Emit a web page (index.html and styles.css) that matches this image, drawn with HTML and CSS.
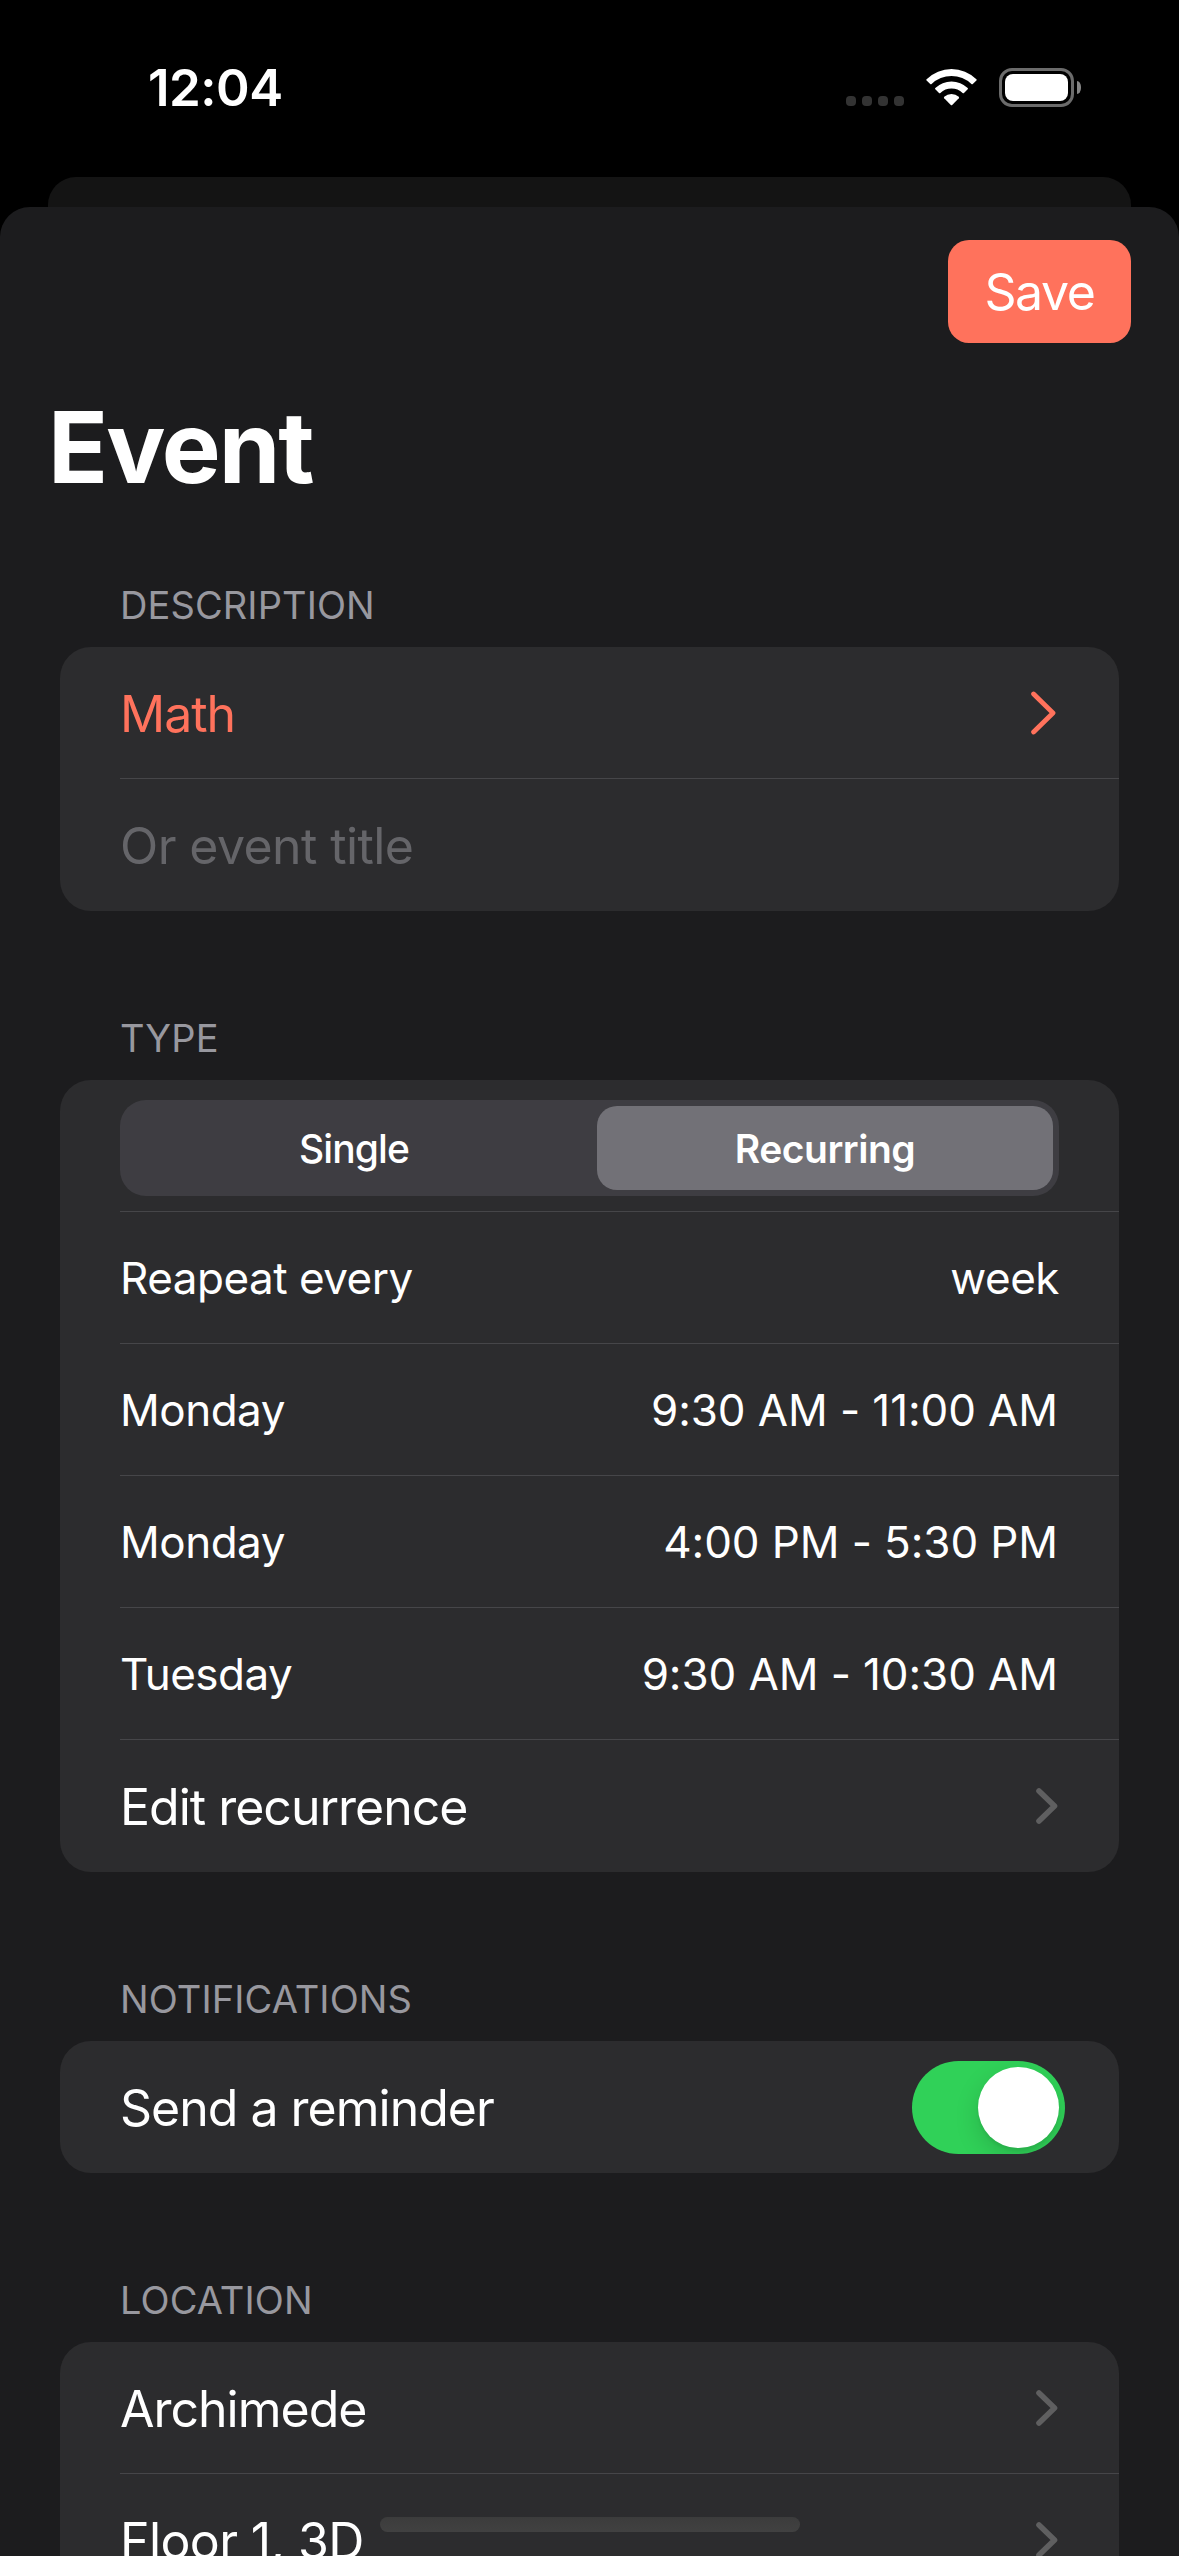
FILE: index.html
```html
<!DOCTYPE html>
<html lang="en">

<head>
    <meta charset="utf-8">
    <title>Event</title>
    <meta name="viewport" content="width=device-width,initial-scale=1">
    <link rel="stylesheet" href="styles.css">
</head>

<body>
    <svg class="defs">
        <symbol id="chevron" viewBox="0 0 22 36">
            <path d="M3 3 L18.5 18 L3 33" fill="none" stroke="currentColor" stroke-width="5.6" stroke-linecap="round" stroke-linejoin="round"/>
        </symbol>
    </svg>

    <header class="status">
        <span class="time">12:04</span>
        <div class="indicators">
            <div class="signal"><i></i><i></i><i></i><i></i></div>
            <svg class="wifi" viewBox="0 0 51 38">
                <path d="M0.6 11.2 A35.5 35.5 0 0 1 50.4 11.2 Q51 11.9 50.4 12.6 L46.8 16.1 Q46.1 16.6 45.4 16 A28.6 28.6 0 0 0 5.6 16 Q4.9 16.6 4.2 16.1 L0.6 12.6 Q0 11.9 0.6 11.2 Z"/>
                <path d="M9.3 20 A23.4 23.4 0 0 1 41.7 20 Q42.3 20.7 41.7 21.3 L38 25 Q37.3 25.5 36.6 24.9 A16.2 16.2 0 0 0 14.4 24.9 Q13.7 25.5 13 25 L9.3 21.3 Q8.7 20.7 9.3 20 Z"/>
                <path d="M18.2 28.8 A11 11 0 0 1 32.8 28.8 Q33.4 29.5 32.8 30.2 L26.2 37 Q25.5 37.7 24.8 37 L18.2 30.2 Q17.6 29.5 18.2 28.8 Z"/>
            </svg>
            <div class="battery">
                <div class="battery-body"><div class="battery-level"></div></div>
                <div class="battery-cap"></div>
            </div>
        </div>
    </header>

    <!-- edge of the sheet underneath -->
    <div class="sheet-behind"></div>

    <main class="sheet">
        <div class="toolbar">
            <button class="save">Save</button>
        </div>
        <h1>Event</h1>

        <section>
            <h2>Description</h2>
            <div class="card">
                <div class="row accent">
                    <span class="label">Math</span>
                    <svg class="chevron-big" viewBox="0 0 25 44"><path d="M2.6 3 L22 22 L2.6 41" fill="none" stroke="currentColor" stroke-width="4.8" stroke-linecap="round" stroke-linejoin="round"/></svg>
                </div>
                <div class="row placeholder"><span class="label title">Or event title</span></div>
            </div>
        </section>

        <section>
            <h2>Type</h2>
            <div class="card">
                <div class="row">
                    <div class="segmented">
                        <span class="segment">Single</span>
                        <span class="segment selected">Recurring</span>
                    </div>
                </div>
                <div class="row small"><span>Reapeat every</span><span>week</span></div>
                <div class="row small"><span>Monday</span><span class="hours">9:30 AM - 11:00 AM</span></div>
                <div class="row small"><span>Monday</span><span class="hours">4:00 PM - 5:30 PM</span></div>
                <div class="row small"><span>Tuesday</span><span class="hours">9:30 AM - 10:30 AM</span></div>
                <div class="row"><span class="label">Edit recurrence</span><svg class="chevron"><use href="#chevron"/></svg></div>
            </div>
        </section>

        <section>
            <h2>Notifications</h2>
            <div class="card">
                <div class="row">
                    <span class="label">Send a reminder</span>
                    <div class="switch"><div class="knob"></div></div>
                </div>
            </div>
        </section>

        <section>
            <h2>Location</h2>
            <div class="card">
                <div class="row"><span class="label">Archimede</span><svg class="chevron"><use href="#chevron"/></svg></div>
                <div class="row"><span class="label title">Floor 1, 3D</span><svg class="chevron"><use href="#chevron"/></svg></div>
            </div>
        </section>
    </main>

    <div class="home-indicator"></div>
</body>

</html>
```
FILE: styles.css
```css
* { margin:0; padding:0; box-sizing:border-box }
html,body { width:100%; height:100%; overflow:hidden; background:#000 }
body { display:flex; flex-direction:column; font-family:Inter,"Liberation Sans",sans-serif; font-size:50px; color:#fff; white-space:nowrap }
svg { display:block; flex:none }
.defs { position:absolute; width:0; height:0 }

/* status bar */
.status { flex:none; height:177px; padding:0 98px 0 148px; display:flex; justify-content:space-between }
.time { margin-top:57px; font-size:51px; font-weight:600; line-height:61px; letter-spacing:-0.5px }
.indicators { margin-top:68px; height:39px; display:flex }
.signal { display:flex; gap:6px; padding-top:28px; margin-right:22px }
.signal i { width:10px; height:10px; border-radius:4px; background:#333 }
.wifi { width:51px; height:38px; fill:#fff; margin-right:22px }
.battery { display:flex; align-items:center; gap:3px }
.battery-body { width:75px; height:39px; padding:3px; border:3px solid #6b6b6b; border-radius:13px }
.battery-level { width:63px; height:27px; border-radius:8px; background:#fff }
.battery-cap { width:4px; height:13px; border-radius:0 4px 4px 0 / 0 6px 6px 0; background:#858585 }

.sheet-behind { flex:none; height:30px; margin:0 48px; border-radius:28px 28px 0 0; background:#141414 }
.sheet { flex:1; min-height:0; overflow:hidden; border-radius:30px 30px 0 0; background:#1c1c1e }

.toolbar { height:136px; padding:33px 48px 0; display:flex; justify-content:flex-end }
.save { width:183px; height:103px; border:0; border-radius:21px; background:#ff725c; color:#fff; font:400 50px Inter,"Liberation Sans",sans-serif; letter-spacing:-1.4px }
h1 { height:205px; padding:44px 48px 0; font-size:99px; line-height:120px; font-weight:700; letter-spacing:-2px }

/* grouped list */
section { padding:0 60px; margin-bottom:70px }
h2 { height:99px; padding:34px 0 0 60px; font-size:38px; line-height:46px; font-weight:400; letter-spacing:0.1px; text-transform:uppercase; color:#98989f }
.card { border-radius:31px; background:#2c2c2e; overflow:hidden }
.row { height:132px; margin-left:60px; padding-right:60px; display:flex; align-items:center; justify-content:space-between; border-bottom:1px solid #464649 }
.row:last-child { border-bottom:0 }
.label { padding-top:2px; letter-spacing:-1px }
.title { letter-spacing:-0.6px }
.small { font-size:44px; letter-spacing:-0.5px }
.hours { margin-right:1px; letter-spacing:-0.1px }
.accent { color:#ff725c }
.placeholder { color:#656569 }
.chevron { width:22px; height:36px; margin-right:1px; color:#5f5f60 }
.chevron-big { width:25px; height:44px; margin-right:3px }

.segmented { width:939px; height:96px; padding:6px; margin-bottom:-5px; display:flex; border-radius:26px; background:#3e3d42 }
.segment { flex:1; padding-right:15px; display:flex; align-items:center; justify-content:center; font-size:39px; font-weight:500; letter-spacing:-0.9px }
.selected { flex:none; width:456px; padding:0; border-radius:20px; background:#727177; font-weight:600; letter-spacing:-0.5px }

.switch { width:153px; height:93px; padding:6px; margin-right:-6px; display:flex; justify-content:flex-end; border-radius:47px; background:#30d158; overflow:hidden }
.knob { width:81px; height:81px; border-radius:50%; background:#fff; box-shadow:0 9px 24px rgba(0,0,0,.15),0 3px 3px rgba(0,0,0,.06) }

.home-indicator { position:absolute; left:380px; top:2517px; width:420px; height:15px; border-radius:8px; background:linear-gradient(#3c3c3c,#414141) }
```
